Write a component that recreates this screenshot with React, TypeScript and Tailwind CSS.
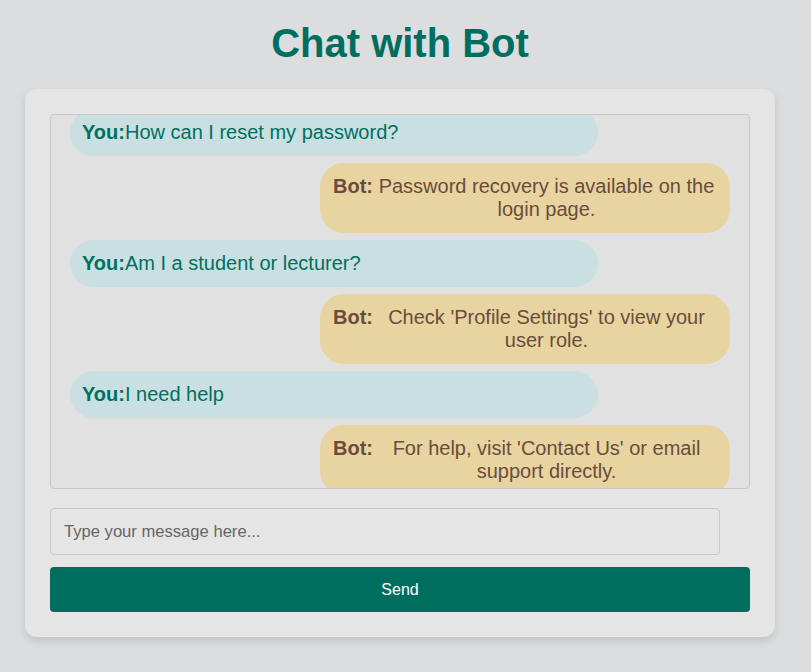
const messages = [
	{ from: 'user', text: 'How can I reset my password?' },
	{ from: 'bot', text: 'Password recovery is available on the login page.' },
	{ from: 'user', text: 'Am I a student or lecturer?' },
	{ from: 'bot', text: "Check 'Profile Settings' to view your user role." },
	{ from: 'user', text: 'I need help' },
	{ from: 'bot', text: "For help, visit 'Contact Us' or email support directly." },
]

/**
 * Simple chat page with a bot.
 */
const App = () => {
	return (
		<div className="min-h-screen bg-[#dcdddf] pt-5 font-['Liberation_Sans',Arial,sans-serif]">
			<div className="w-[800px]">
				<h1 className="mb-[23px] text-center text-[40px] font-bold leading-[46px] text-[#006e5f]">Chat with Bot</h1>

				<div className="mx-auto w-[750px] rounded-xl bg-[#e5e5e5] p-[25px] shadow-[0_4px_10px_rgba(0,0,0,0.12)]">
					{/* Messages */}
					<div className="flex h-[375px] flex-col justify-center gap-[7px] overflow-hidden rounded border border-[#c8c8c8] bg-[#e1e1e1] px-[19px]">
						{messages.map((m, i) =>
							m.from === 'user' ? (
								<div
									key={i}
									className="w-[528px] shrink-0 rounded-3xl bg-[#c9dfe1] px-3 py-3 text-[20px] leading-[23px] text-[#00705f]"
								>
									<strong>You:</strong>
									{m.text}
								</div>
							) : (
								<div
									key={i}
									className="flex w-[410px] shrink-0 self-end rounded-3xl bg-[#e7d4a1] py-3 pl-[13px] pr-[15px] text-[20px] leading-[23px] text-[#6b4c3c]"
								>
									<strong className="mr-[5px]">Bot:</strong>
									<p className="flex-1 text-center">{m.text}</p>
								</div>
							),
						)}
					</div>

					{/* Input */}
					<input
						type="text"
						placeholder="Type your message here..."
						className="mt-[19px] h-[47px] w-[670px] rounded border border-[#c8c8c8] bg-[#e5e5e5] px-[13px] text-[16.6px] text-[#333] outline-none placeholder:text-[#666]"
					/>

					<button className="mt-3 h-[45px] w-full rounded bg-[#006e5f] text-[16px] text-white">Send</button>
				</div>
			</div>
		</div>
	)
}

export default App
